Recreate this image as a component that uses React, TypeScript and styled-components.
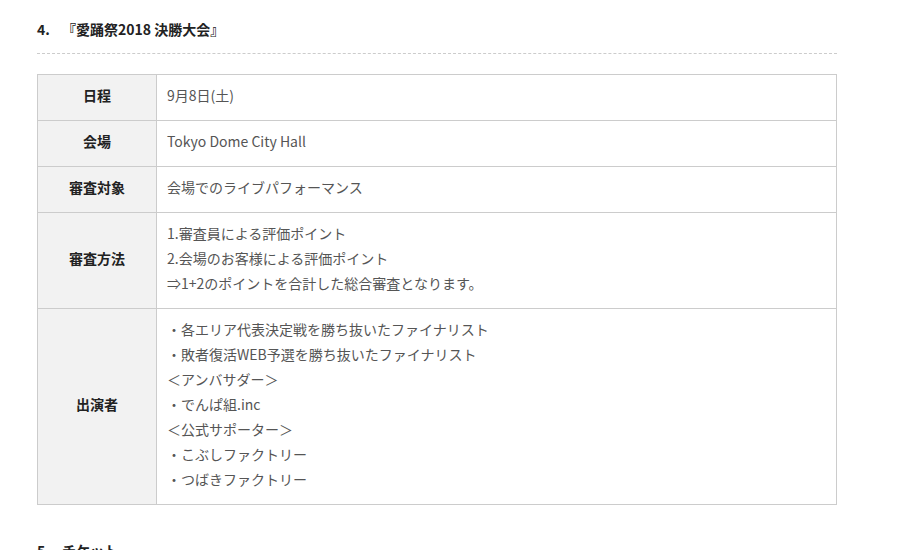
import React from "react";
import styled, { createGlobalStyle } from "styled-components";

const GlobalStyle = createGlobalStyle`
  body {
    margin: 0;
    background: #fff;
    font-family: "Noto Sans CJK JP", "Noto Sans", sans-serif;
    color: #333;
  }
`;

// Page wrapper
const Page = styled.div`
  padding: 17px 0 0 37px;
  width: 800px;
`;

// Section heading with dashed underline
const Heading = styled.h3<{ $dashed?: boolean }>`
  margin: 0;
  font-size: 14px;
  line-height: 24px;
  font-weight: bold;
  color: #222;
  padding-bottom: ${(p) => (p.$dashed ? "12px" : "0")};
  border-bottom: ${(p) => (p.$dashed ? "1px dashed #ccc" : "none")};
  display: flex;
`;

const Num = styled.span`
  width: 25px;
`;

const Table = styled.table`
  margin: 20px 0 33px;
  width: 800px;
  border-collapse: collapse;
  font-size: 14px;
`;

const Th = styled.th`
  width: 119px;
  background: #f2f2f2;
  border: 1px solid #ccc;
  font-weight: bold;
  color: #222;
  text-align: center;
  padding: 8px 10px 12px;
  line-height: 25px;
  box-sizing: border-box;
`;

const Td = styled.td`
  border: 1px solid #ccc;
  padding: 8px 10px 12px;
  line-height: 25px;
  color: #555;
  text-align: left;
`;

const rows: { label: string; lines: string[] }[] = [
  { label: "日程", lines: ["9月8日(土)"] },
  { label: "会場", lines: ["Tokyo Dome City Hall"] },
  { label: "審査対象", lines: ["会場でのライブパフォーマンス"] },
  {
    label: "審査方法",
    lines: [
      "1.審査員による評価ポイント",
      "2.会場のお客様による評価ポイント",
      "⇒1+2のポイントを合計した総合審査となります。",
    ],
  },
  {
    label: "出演者",
    lines: [
      "・各エリア代表決定戦を勝ち抜いたファイナリスト",
      "・敗者復活WEB予選を勝ち抜いたファイナリスト",
      "＜アンバサダー＞",
      "・でんぱ組.inc",
      "＜公式サポーター＞",
      "・こぶしファクトリー",
      "・つばきファクトリー",
    ],
  },
];

export default function App() {
  return (
    <Page>
      <GlobalStyle />
      <Heading $dashed>
        <Num>4.</Num>
        <span>『愛踊祭2018 決勝大会』</span>
      </Heading>
      <Table>
        <tbody>
          {rows.map((row) => (
            <tr key={row.label}>
              <Th>{row.label}</Th>
              <Td>
                {row.lines.map((line, i) => (
                  <div key={i}>{line}</div>
                ))}
              </Td>
            </tr>
          ))}
        </tbody>
      </Table>
      <Heading>
        <Num>5.</Num>
        <span>チケット</span>
      </Heading>
    </Page>
  );
}
